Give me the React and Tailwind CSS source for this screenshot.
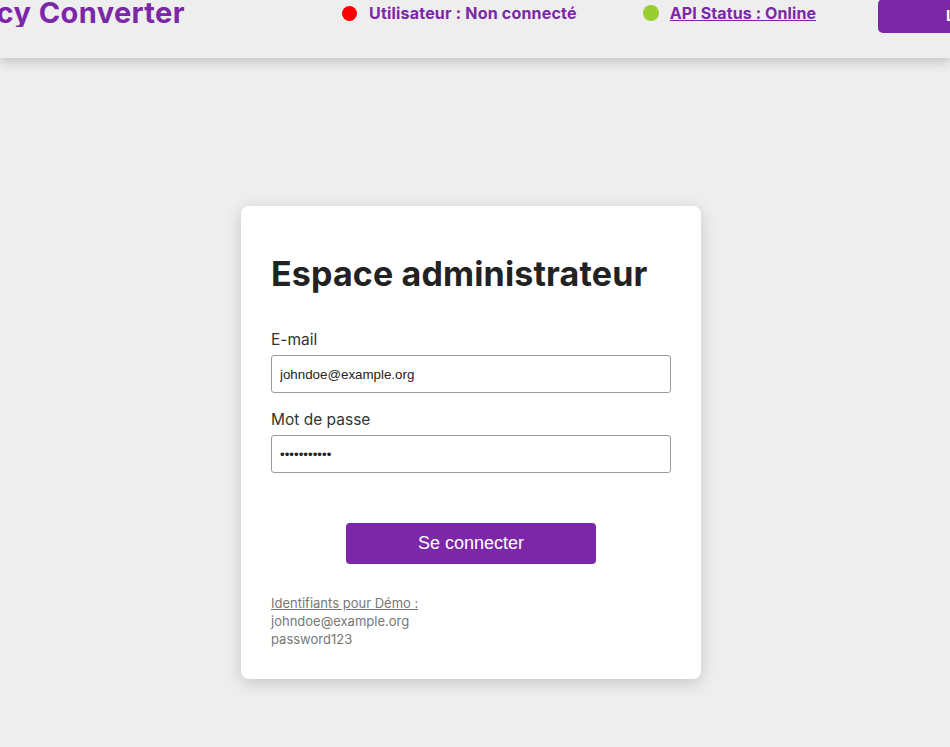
import React from "react";

export default function App() {
  const rubik = { fontFamily: "Inter, 'Noto Sans', sans-serif" };
  return (
    <div className="min-h-[747px] bg-[#eeeeee] overflow-hidden" style={rubik}>
      <header className="h-[58px] bg-[#eeeeee] shadow-[0_4px_10px_rgba(0,0,0,0.18)] relative flex items-start">
        <div className="w-[185px] overflow-hidden flex justify-end shrink-0">
          <span className="whitespace-nowrap text-[29px] font-bold tracking-[0.4px] text-[#7b27a8] leading-none mt-[-2px]">
            Currency Converter
          </span>
        </div>
        <div className="flex items-center ml-[157px] mt-[5px]">
          <span className="w-[15px] h-[15px] rounded-full bg-[#ff0000] inline-block" />
          <span className="ml-[12px] text-[16px] font-bold tracking-[0.2px] text-[#7b27a8] leading-none whitespace-nowrap">
            Utilisateur : Non connecté
          </span>
        </div>
        <div className="flex items-center ml-[66px] mt-[5px]">
          <span className="w-[16px] h-[16px] rounded-full bg-[#9acd32] inline-block" />
          <span className="ml-[11px] text-[16px] font-bold tracking-[0.1px] text-[#7b27a8] underline leading-none whitespace-nowrap">
            API Status : Online
          </span>
        </div>
        <div className="ml-auto mr-[-60px] shrink-0 w-[132px] h-[34px] bg-[#7b27a8] rounded-b-[5px] rounded-tl-[5px] mt-[-1px] flex items-center pl-[68px] text-white font-bold text-[15px]">
          Login
        </div>
      </header>

      <main className="flex justify-center pr-[8px] pt-[148px]">
        <div className="w-[460px] bg-white rounded-[8px] shadow-[0_4px_16px_rgba(0,0,0,0.17)] px-[30px] pt-[50px] pb-[31px]">
          <h1 className="text-[34px] font-bold tracking-[0.15px] text-[#222222] leading-[36px] whitespace-nowrap">Espace administrateur</h1>

          <label className="block mt-[38px] text-[15.5px] text-[#333333] leading-[20px]">E-mail</label>
          <input
            readOnly
            value="johndoe@example.org"
            className="block mt-[5px] w-[400px] h-[38px] border border-[#9a9a9a] rounded-[3px] px-[8px] text-[13.33px] text-[#222] outline-none"
            style={{ fontFamily: "'Liberation Sans', Arial, sans-serif" }}
          />
          <label className="block mt-[17px] text-[15.5px] text-[#333333] leading-[20px]">Mot de passe</label>
          <input
            readOnly
            type="password"
            value="password123"
            className="block mt-[5px] w-[400px] h-[38px] border border-[#9a9a9a] rounded-[3px] px-[8px] text-[13.33px] text-[#222] outline-none"
            style={{ fontFamily: "'Liberation Sans', Arial, sans-serif" }}
          />
          <div className="flex justify-center mt-[50px]">
            <button
              className="w-[250px] h-[41px] bg-[#7b27a8] rounded-[4px] text-white text-[18px]"
              style={{ fontFamily: "'Liberation Sans', Arial, sans-serif" }}
            >
              Se connecter
            </button>
          </div>
          <div className="mt-[30px] text-[13px] text-[#777777] leading-[18px]">
            <div className="underline">Identifiants pour Démo :</div>
            <div>johndoe@example.org</div>
            <div>password123</div>
          </div>
        </div>
      </main>
    </div>
  );
}
